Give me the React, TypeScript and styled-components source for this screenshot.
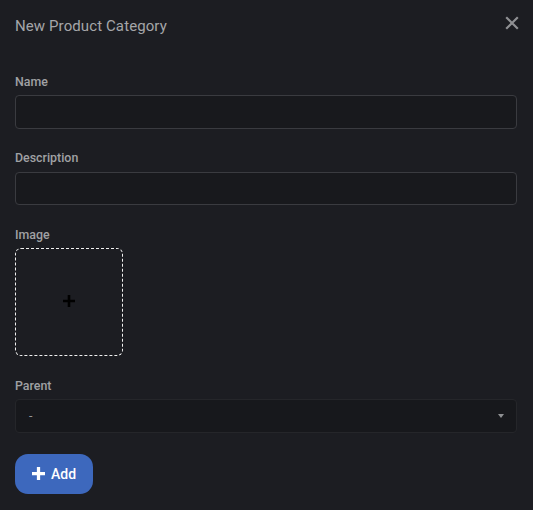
import React from 'react';
import styled, { createGlobalStyle } from 'styled-components';

const Global = createGlobalStyle`
  html, body { margin: 0; padding: 0; background: #1c1d22; }
  body { font-family: Roboto, "Liberation Sans", sans-serif; }
`;

const Dialog = styled.div`
  position: relative;
  box-sizing: border-box;
  width: 533px;
  height: 510px;
  padding: 16px 16px 16px 15px;
  background: #1c1d22;
  overflow: hidden;
`;

const Title = styled.h2`
  margin: 0 0 38px;
  font-size: 15px;
  line-height: 20px;
  font-weight: 400;
  letter-spacing: 0.1px;
  color: #a5a6a9;
`;

const CloseButton = styled.button`
  position: absolute;
  top: 16px;
  right: 14px;
  width: 14px;
  height: 14px;
  padding: 0;
  border: 0;
  background: none;
  color: #8f9093;
  display: flex;
`;

const Field = styled.div<{ $gap?: number }>`
  display: flex;
  flex-direction: column;
  margin-bottom: ${(p) => p.$gap ?? 22}px;
`;

const Label = styled.label<{ $gap?: number }>`
  display: block;
  margin-bottom: ${(p) => p.$gap ?? 5}px;
  font-size: 12.4px;
  line-height: 16px;
  font-weight: 500;
  color: #a0a1a4;
`;

const Input = styled.input<{ $height?: number }>`
  box-sizing: border-box;
  width: 502px;
  height: ${(p) => p.$height ?? 34}px;
  padding: 0 13px;
  background: #18191d;
  border: 1px solid #3a3b40;
  border-radius: 4px;
  outline: none;
  color: #c8c8c8;
`;

const ImageDrop = styled.div`
  box-sizing: border-box;
  width: 108px;
  height: 108px;
  padding-bottom: 3px;
  border: 1px dashed #f0f0f0;
  border-radius: 6px;
  display: flex;
  align-items: center;
  justify-content: center;
  color: #000;
`;

const Select = styled.div`
  box-sizing: border-box;
  width: 502px;
  height: 34px;
  padding: 0 12px 2px 13px;
  display: flex;
  align-items: center;
  justify-content: space-between;
  background: #17181c;
  border: 1px solid #25262a;
  border-radius: 4px;
  font-size: 12.5px;
  color: #94959a;
`;

const Caret = styled.svg`
  width: 6px;
  height: 4px;
  margin-top: 2px;
  fill: #8f9093;
`;

const AddButton = styled.button`
  box-sizing: border-box;
  width: 78px;
  height: 40px;
  padding: 0 0 1px;
  display: flex;
  align-items: center;
  justify-content: center;
  gap: 6px;
  background: #3d68bd;
  border: 0;
  border-radius: 13px;
  color: #fff;
  font-family: inherit;
  font-size: 14px;
  font-weight: 500;
`;

const PlusIcon = ({ size, width }: { size: number; width: number }) => (
  <svg width={size} height={size} viewBox="0 0 12 12" fill="none" stroke="currentColor" strokeWidth={width}>
    <path d="M6 0v12M0 6h12" />
  </svg>
);

export default function App() {
  return (
    <Dialog>
      <Global />
      <Title>New Product Category</Title>
      <CloseButton aria-label="Close">
        <svg width="14" height="14" viewBox="0 0 14 14" fill="none" stroke="currentColor" strokeWidth="2.2">
          <path d="M1.2 1.2l11.6 11.6M12.8 1.2l-11.6 11.6" />
        </svg>
      </CloseButton>
      <Field $gap={21}>
        <Label>Name</Label>
        <Input />
      </Field>
      <Field $gap={22}>
        <Label $gap={6}>Description</Label>
        <Input $height={33} />
      </Field>
      <Field>
        <Label>Image</Label>
        <ImageDrop>
          <PlusIcon size={12} width={2.6} />
        </ImageDrop>
      </Field>
      <Field $gap={21}>
        <Label>Parent</Label>
        <Select>
          <span>-</span>
          <Caret viewBox="0 0 6 4">
            <path d="M0 0h6L3 4z" />
          </Caret>
        </Select>
      </Field>
      <AddButton>
        <PlusIcon size={13} width={3} />
        Add
      </AddButton>
    </Dialog>
  );
}
